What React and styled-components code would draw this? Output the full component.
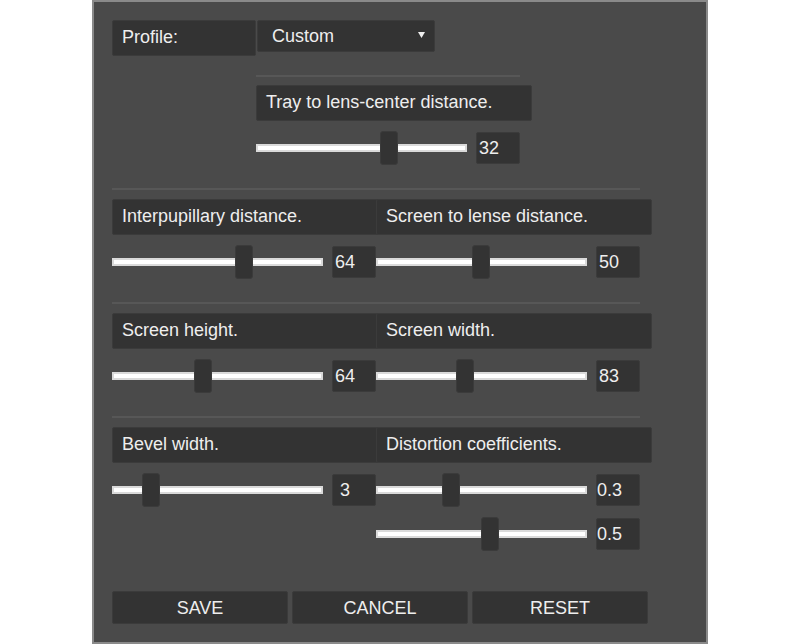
import React from "react";
import styled, { createGlobalStyle } from "styled-components";

const GlobalStyle = createGlobalStyle`
  html, body { margin: 0; padding: 0; background: #ffffff; }
  body { font-family: "Liberation Sans", Arial, sans-serif; }
`;

const Panel = styled.div`
  box-sizing: border-box;
  width: 616px;
  height: 644px;
  margin: 0 auto;
  padding: 18px;
  background: #4a4a4a;
  border: 2px solid #8a8a8a;
  display: flex;
  flex-direction: column;
  color: #eeeeee;
  font-size: 18px;
`;

const ProfileRow = styled.div`
  display: flex;
  align-items: flex-start;
  gap: 1px;
`;

const Label = styled.div`
  box-sizing: border-box;
  width: ${(p) => p.$w || 276}px;
  height: 36px;
  flex: none;
  background: #333333;
  border: 1px solid #3b3b3b;
  border-radius: 2px;
  padding: 0 0 1px 9px;
  line-height: 33px;
  white-space: nowrap;
`;

const Select = styled.div`
  box-sizing: border-box;
  width: 178px;
  height: 32px;
  background: #333333;
  border: 1px solid #3b3b3b;
  border-radius: 2px;
  padding: 0 9px 0 14px;
  display: flex;
  align-items: center;
  justify-content: space-between;
`;

const Arrow = styled.svg`
  width: 7px;
  height: 6px;
  margin-top: -2px;
`;

const TopSection = styled.div`
  margin-left: 144px;
  margin-top: 19px;
  display: flex;
  flex-direction: column;
`;

const Section = styled.div`
  display: flex;
  flex-direction: column;
  margin-top: 23px;
`;

const Divider = styled.div`
  height: 2px;
  width: ${(p) => p.$w}px;
  background: #575757;
`;

const Columns = styled.div`
  display: grid;
  grid-template-columns: repeat(${(p) => p.$n}, 264px);
  margin-top: ${(p) => p.$gap}px;
`;

const Column = styled.div`
  display: flex;
  flex-direction: column;
  gap: 10px;
  min-width: 0;
`;

const SliderRow = styled.div`
  display: flex;
  align-items: center;
  gap: 9px;
  width: 264px;
  height: 34px;
`;

const Track = styled.div`
  position: relative;
  box-sizing: border-box;
  flex: none;
  width: 211px;
  height: 8px;
  background: #ffffff;
  border: 2px solid #dadada;
`;

const Thumb = styled.div`
  position: absolute;
  top: 50%;
  transform: translateY(-50%);
  box-sizing: border-box;
  width: 18px;
  height: 34px;
  background: #333333;
  border: 1px solid #3b3b3b;
  border-radius: 3px;
`;

const Value = styled.div`
  box-sizing: border-box;
  flex: none;
  width: 44px;
  height: 32px;
  background: #333333;
  border: 1px solid #3b3b3b;
  border-radius: 2px;
  padding: 0 18px 0 0;
  text-align: center;
  white-space: nowrap;
  line-height: 30px;
`;

const ButtonRow = styled.div`
  display: flex;
  gap: 4px;
  margin-top: auto;
`;

const Button = styled.button`
  box-sizing: border-box;
  width: 176px;
  height: 33px;
  padding: 2px 0 0;
  background: #333333;
  border: 1px solid #3b3b3b;
  border-radius: 2px;
  color: #eeeeee;
  font-family: inherit;
  font-size: 18px;
  text-align: center;
  cursor: pointer;
`;

const TRACK_W = 211;
const THUMB_W = 18;

function Slider({ value, pos }) {
  return (
    <SliderRow>
      <Track>
        <Thumb style={{ left: `${Math.round(pos * (TRACK_W - THUMB_W)) - 2}px` }} />
      </Track>
      <Value>{value}</Value>
    </SliderRow>
  );
}

function Group({ label, sliders }) {
  return (
    <Column>
      <Label>{label}</Label>
      {sliders.map((s, i) => (
        <Slider key={i} value={s.value} pos={s.pos} />
      ))}
    </Column>
  );
}

const top = {
  label: "Tray to lens-center distance.",
  sliders: [{ value: "32", pos: 0.64 }],
};

const sections = [
  [
    { label: "Interpupillary distance.", sliders: [{ value: "64", pos: 0.637 }] },
    { label: "Screen to lense distance.", sliders: [{ value: "50", pos: 0.497 }] },
  ],
  [
    { label: "Screen height.", sliders: [{ value: "64", pos: 0.425 }] },
    { label: "Screen width.", sliders: [{ value: "83", pos: 0.415 }] },
  ],
  [
    { label: "Bevel width.", sliders: [{ value: "3", pos: 0.155 }] },
    {
      label: "Distortion coefficients.",
      sliders: [
        { value: "0.3", pos: 0.342 },
        { value: "0.5", pos: 0.544 },
      ],
    },
  ],
];

export default function App() {
  return (
    <>
      <GlobalStyle />
      <Panel>
        <ProfileRow>
          <Label $w={144}>Profile:</Label>
          <Select>
            <span>Custom</span>
            <Arrow viewBox="0 0 7 6">
              <polygon points="0,0 7,0 3.5,6" fill="#eeeeee" />
            </Arrow>
          </Select>
        </ProfileRow>

        <TopSection>
          <Divider $w={264} />
          <Columns $n={1} $gap={8}>
            <Group label={top.label} sliders={top.sliders} />
          </Columns>
        </TopSection>

        {sections.map((cols, i) => (
          <Section key={i}>
            <Divider $w={528} />
            <Columns $n={2} $gap={9}>
              {cols.map((g, j) => (
                <Group key={j} label={g.label} sliders={g.sliders} />
              ))}
            </Columns>
          </Section>
        ))}

        <ButtonRow>
          <Button>SAVE</Button>
          <Button>CANCEL</Button>
          <Button>RESET</Button>
        </ButtonRow>
      </Panel>
    </>
  );
}
